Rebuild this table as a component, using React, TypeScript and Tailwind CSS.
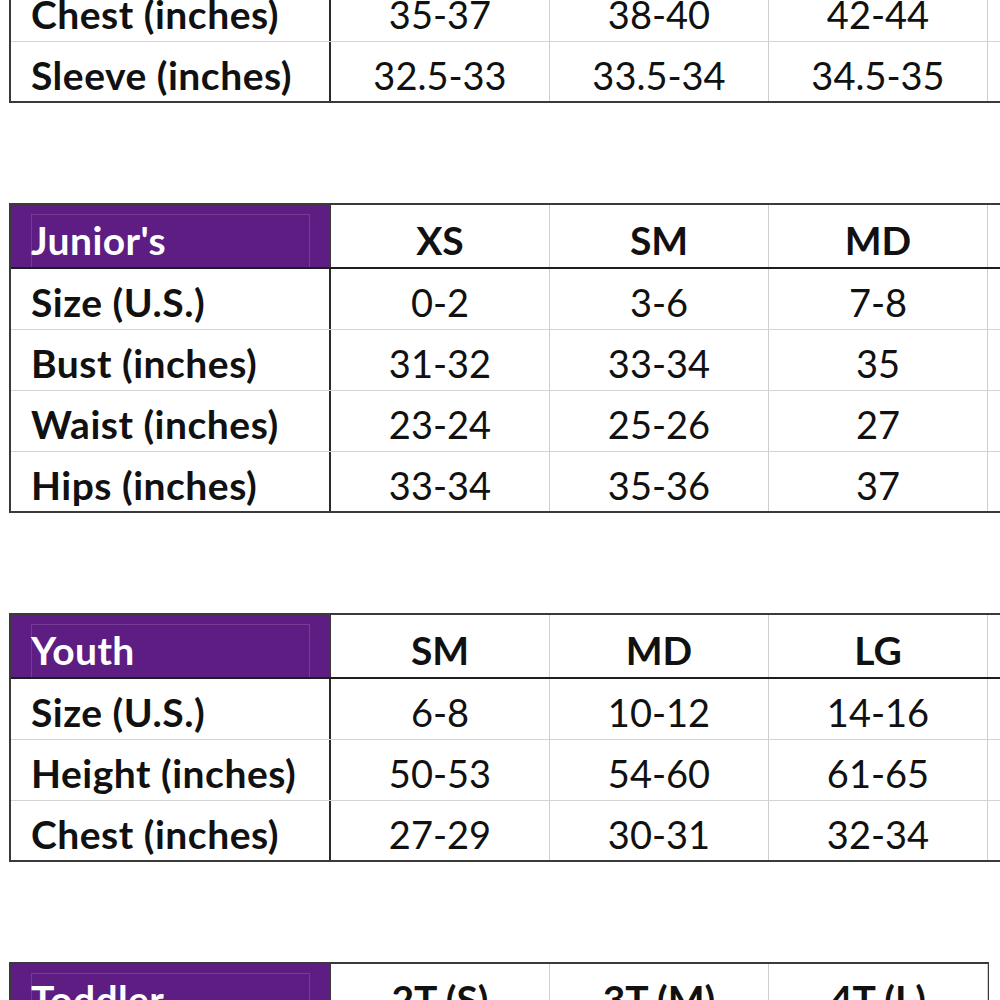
type Table = {
  title?: string;
  head?: string[];
  rows: [string, ...string[]][];
  cols: number;
};

const tables: Table[] = [
  {
    cols: 5,
    rows: [
      ["Chest (inches)", "35-37", "38-40", "42-44", "46-48"],
      ["Sleeve (inches)", "32.5-33", "33.5-34", "34.5-35", "35.5-36"],
    ],
  },
  {
    title: "Junior's",
    head: ["XS", "SM", "MD", "LG"],
    cols: 5,
    rows: [
      ["Size (U.S.)", "0-2", "3-6", "7-8", "9-12"],
      ["Bust (inches)", "31-32", "33-34", "35", "36-37"],
      ["Waist (inches)", "23-24", "25-26", "27", "28-29"],
      ["Hips (inches)", "33-34", "35-36", "37", "38-39"],
    ],
  },
  {
    title: "Youth",
    head: ["SM", "MD", "LG", "XL"],
    cols: 5,
    rows: [
      ["Size (U.S.)", "6-8", "10-12", "14-16", "18-20"],
      ["Height (inches)", "50-53", "54-60", "61-65", "66-68"],
      ["Chest (inches)", "27-29", "30-31", "32-34", "35-37"],
    ],
  },
  {
    title: "Toddler",
    head: ["2T (S)", "3T (M)", "4T (L)"],
    cols: 4,
    rows: [["Size (U.S.)", "2T", "3T", "4T"]],
  },
];

function SizeTable({ t, first }: { t: Table; first?: boolean }) {
  const width = t.cols === 5 ? "w-[1198px]" : "w-[980px]";
  return (
    <div
      className={`${width} shrink-0 border-l-2 border-[#3a3a3a] ${
        t.cols === 4 ? "border-r-2" : ""
      } ${first ? "" : "border-t-2"}`}
    >
      {t.title && t.head && (
        <div className="flex h-[64px] border-b-2 border-[#1e1e1e]">
          <div className="relative flex w-[320px] shrink-0 items-center border-r border-[#3a3a3a] bg-[#5d1d82] pl-[20px] pt-[9px] text-[39px] font-bold tracking-[0.4px] text-white">
            <div className="absolute top-[9px] right-[20px] bottom-0 left-[20px] border-x border-t border-white/15" />
            <span className="relative">{t.title}</span>
          </div>
          {t.head.map((h, i) => (
            <div
              key={i}
              className="flex w-[219px] shrink-0 items-center justify-center border-r border-[#cfcfcf] pt-[9px] text-[39px] font-bold text-[#111]"
            >
              {h}
            </div>
          ))}
        </div>
      )}
      {t.rows.map((r, ri) => {
        const last = ri === t.rows.length - 1;
        return (
          <div
            key={ri}
            className={`flex h-[61px] ${
              last ? "border-b-2 border-[#3a3a3a]" : "border-b border-[#d4d4d4]"
            }`}
          >
            <div className="flex w-[320px] shrink-0 items-center border-r-2 border-[#2a2a2a] pl-[20px] pt-[7px] text-[39px] font-bold tracking-[0.5px] text-[#111]">
              {r[0]}
            </div>
            {r.slice(1).map((c, ci) => (
              <div
                key={ci}
                className="flex w-[219px] shrink-0 items-center justify-center border-r border-[#cfcfcf] pt-[7px] text-[38px] text-[#111]"
              >
                {c}
              </div>
            ))}
          </div>
        );
      })}
    </div>
  );
}

export default function App() {
  return (
    <div
      className="h-[1000px] w-[1000px] overflow-hidden bg-white pl-[9px]"
      style={{ fontFamily: "Lato, 'Open Sans', sans-serif" }}
    >
      <div className="-mt-[19px] flex flex-col gap-[100px]">
        {tables.map((t, i) => (
          <SizeTable key={i} t={t} first={i === 0} />
        ))}
      </div>
    </div>
  );
}
